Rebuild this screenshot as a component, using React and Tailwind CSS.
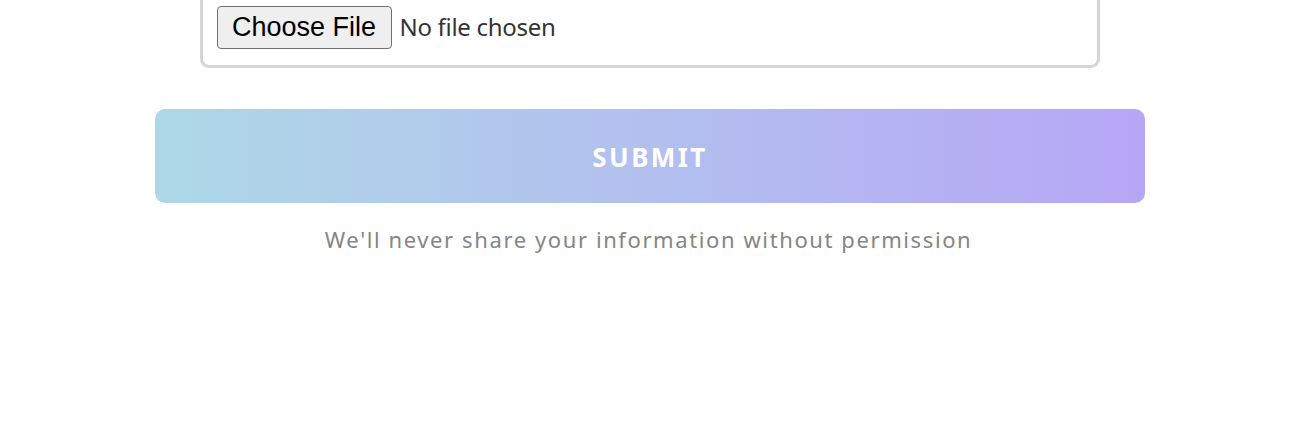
export default function App() {
  return (
    <div className="w-[1297px] h-[433px] bg-white flex flex-col items-center" style={{ fontFamily: '"Noto Sans", "Open Sans", sans-serif' }}>
      <div className="w-[900px] ml-[2px] border-x-[3px] border-b-[3px] border-t-0 border-[#d4d4db] rounded-b-[9px] pl-[14px] pt-[5px] pb-[16px]">
        <input
          type="file"
          className="block text-[24px] leading-[43px] text-[#333] tracking-[-0.3px] file:w-[175px] file:h-[43px] file:mr-[8px] file:bg-[#efefef] file:border file:border-solid file:border-[#6f6f6f] file:rounded-[4px] file:text-black file:text-[27px] file:leading-[30px] file:font-[Arial] file:tracking-normal file:p-0"
          style={{ fontFamily: '"Noto Sans", sans-serif' }}
        />
      </div>
      <button className="mt-[41px] ml-[3px] w-[990px] h-[94px] pt-[3px] rounded-[10px] bg-gradient-to-r from-[#add8e6] to-[#b6a6f6] text-white text-[26px] font-bold tracking-[2.4px] flex items-center justify-center">
        SUBMIT
      </button>
      <p className="mt-[20px] text-[22px] text-[#858585] tracking-[1.6px]">
        We'll never share your information without permission
      </p>
    </div>
  );
}
